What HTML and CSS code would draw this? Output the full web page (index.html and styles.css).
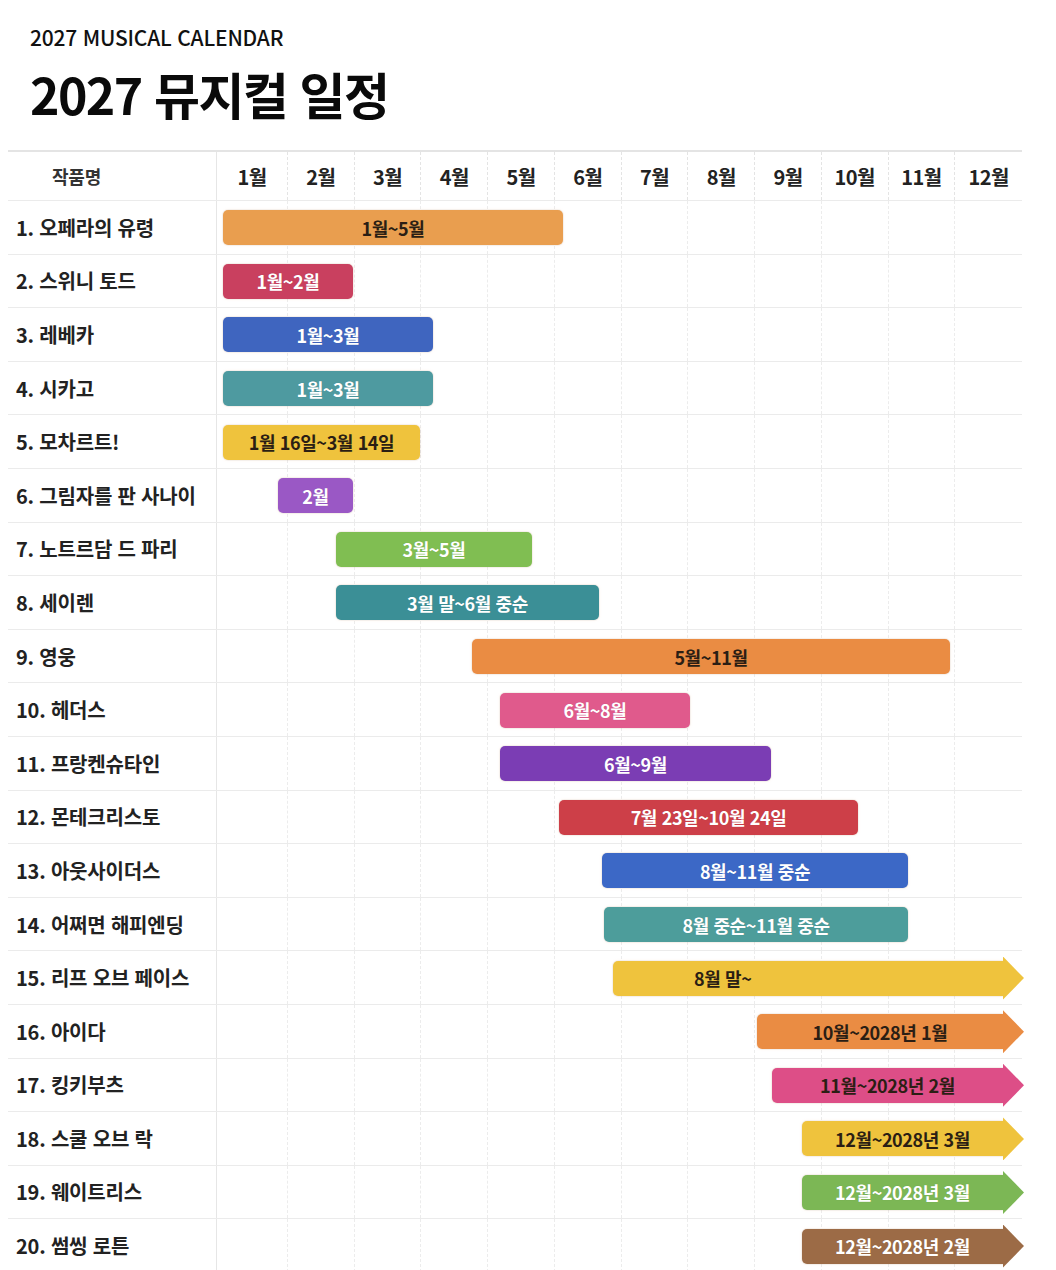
FILE: index.html
```html
<!DOCTYPE html>
<html lang="ko">
<head>
<meta charset="utf-8">
<title>2027 뮤지컬 일정</title>
<link rel="stylesheet" href="styles.css">
</head>
<body>
<header class="page-head">
  <p class="eyebrow">2027 MUSICAL CALENDAR</p>
  <h1 class="title">2027 뮤지컬 일정</h1>
</header>

<section class="chart">
  <div class="row head">
    <div class="name">작품명</div>
    <div class="track months">
      <span>1월</span><span>2월</span><span>3월</span><span>4월</span><span>5월</span><span>6월</span><span>7월</span><span>8월</span><span>9월</span><span>10월</span><span>11월</span><span>12월</span>
    </div>
  </div>

  <div class="row"><div class="name">1. 오페라의 유령</div><div class="track"><div class="cells"><i></i><i></i><i></i><i></i><i></i><i></i><i></i><i></i><i></i><i></i><i></i><i></i></div><div class="bar orange dark" style="left:6px;width:340px">1월~5월</div></div></div>
  <div class="row"><div class="name">2. 스위니 토드</div><div class="track"><div class="cells"><i></i><i></i><i></i><i></i><i></i><i></i><i></i><i></i><i></i><i></i><i></i><i></i></div><div class="bar crimson" style="left:6px;width:130px">1월~2월</div></div></div>
  <div class="row"><div class="name">3. 레베카</div><div class="track"><div class="cells"><i></i><i></i><i></i><i></i><i></i><i></i><i></i><i></i><i></i><i></i><i></i><i></i></div><div class="bar blue" style="left:6px;width:210px">1월~3월</div></div></div>
  <div class="row"><div class="name">4. 시카고</div><div class="track"><div class="cells"><i></i><i></i><i></i><i></i><i></i><i></i><i></i><i></i><i></i><i></i><i></i><i></i></div><div class="bar teal" style="left:6px;width:210px">1월~3월</div></div></div>
  <div class="row"><div class="name">5. 모차르트!</div><div class="track"><div class="cells"><i></i><i></i><i></i><i></i><i></i><i></i><i></i><i></i><i></i><i></i><i></i><i></i></div><div class="bar yellow dark" style="left:6px;width:197px">1월 16일~3월 14일</div></div></div>
  <div class="row"><div class="name">6. 그림자를 판 사나이</div><div class="track"><div class="cells"><i></i><i></i><i></i><i></i><i></i><i></i><i></i><i></i><i></i><i></i><i></i><i></i></div><div class="bar violet" style="left:61px;width:75px">2월</div></div></div>
  <div class="row"><div class="name">7. 노트르담 드 파리</div><div class="track"><div class="cells"><i></i><i></i><i></i><i></i><i></i><i></i><i></i><i></i><i></i><i></i><i></i><i></i></div><div class="bar green" style="left:119px;width:196px">3월~5월</div></div></div>
  <div class="row"><div class="name">8. 세이렌</div><div class="track"><div class="cells"><i></i><i></i><i></i><i></i><i></i><i></i><i></i><i></i><i></i><i></i><i></i><i></i></div><div class="bar deepteal" style="left:119px;width:263px">3월 말~6월 중순</div></div></div>
  <div class="row"><div class="name">9. 영웅</div><div class="track"><div class="cells"><i></i><i></i><i></i><i></i><i></i><i></i><i></i><i></i><i></i><i></i><i></i><i></i></div><div class="bar tangerine dark" style="left:255px;width:478px">5월~11월</div></div></div>
  <div class="row"><div class="name">10. 헤더스</div><div class="track"><div class="cells"><i></i><i></i><i></i><i></i><i></i><i></i><i></i><i></i><i></i><i></i><i></i><i></i></div><div class="bar pink" style="left:283px;width:190px">6월~8월</div></div></div>
  <div class="row"><div class="name">11. 프랑켄슈타인</div><div class="track"><div class="cells"><i></i><i></i><i></i><i></i><i></i><i></i><i></i><i></i><i></i><i></i><i></i><i></i></div><div class="bar purple" style="left:283px;width:271px">6월~9월</div></div></div>
  <div class="row"><div class="name">12. 몬테크리스토</div><div class="track"><div class="cells"><i></i><i></i><i></i><i></i><i></i><i></i><i></i><i></i><i></i><i></i><i></i><i></i></div><div class="bar red" style="left:342px;width:299px">7월 23일~10월 24일</div></div></div>
  <div class="row"><div class="name">13. 아웃사이더스</div><div class="track"><div class="cells"><i></i><i></i><i></i><i></i><i></i><i></i><i></i><i></i><i></i><i></i><i></i><i></i></div><div class="bar blue2" style="left:385px;width:306px">8월~11월 중순</div></div></div>
  <div class="row"><div class="name">14. 어쩌면 해피엔딩</div><div class="track"><div class="cells"><i></i><i></i><i></i><i></i><i></i><i></i><i></i><i></i><i></i><i></i><i></i><i></i></div><div class="bar teal2" style="left:387px;width:304px">8월 중순~11월 중순</div></div></div>
  <div class="row"><div class="name">15. 리프 오브 페이스</div><div class="track"><div class="cells"><i></i><i></i><i></i><i></i><i></i><i></i><i></i><i></i><i></i><i></i><i></i><i></i></div><div class="bar arrow yellow dark lead" style="left:396px;width:390px">8월 말~</div></div></div>
  <div class="row"><div class="name">16. 아이다</div><div class="track"><div class="cells"><i></i><i></i><i></i><i></i><i></i><i></i><i></i><i></i><i></i><i></i><i></i><i></i></div><div class="bar arrow tangerine dark" style="left:540px;width:246px">10월~2028년 1월</div></div></div>
  <div class="row"><div class="name">17. 킹키부츠</div><div class="track"><div class="cells"><i></i><i></i><i></i><i></i><i></i><i></i><i></i><i></i><i></i><i></i><i></i><i></i></div><div class="bar arrow pink2 dark" style="left:555px;width:231px">11월~2028년 2월</div></div></div>
  <div class="row"><div class="name">18. 스쿨 오브 락</div><div class="track"><div class="cells"><i></i><i></i><i></i><i></i><i></i><i></i><i></i><i></i><i></i><i></i><i></i><i></i></div><div class="bar arrow yellow dark" style="left:585px;width:201px">12월~2028년 3월</div></div></div>
  <div class="row"><div class="name">19. 웨이트리스</div><div class="track"><div class="cells"><i></i><i></i><i></i><i></i><i></i><i></i><i></i><i></i><i></i><i></i><i></i><i></i></div><div class="bar arrow green2" style="left:585px;width:201px">12월~2028년 3월</div></div></div>
  <div class="row"><div class="name">20. 썸씽 로튼</div><div class="track"><div class="cells"><i></i><i></i><i></i><i></i><i></i><i></i><i></i><i></i><i></i><i></i><i></i><i></i></div><div class="bar arrow brown" style="left:585px;width:201px">12월~2028년 2월</div></div></div>
</section>
</body>
</html>
```

FILE: styles.css
```css
* { box-sizing: border-box; }

html, body {
  margin: 0;
  padding: 0;
  background: #ffffff;
}

body {
  font-family: "Noto Sans CJK KR", "Noto Sans", sans-serif;
  color: #1a1a1a;
}

.page-head {
  padding: 22px 0 0 30px;
  height: 150px;
}

.eyebrow {
  margin: 0;
  font-size: 21px;
  line-height: 30px;
  font-weight: 500;
  letter-spacing: -0.2px;
  color: #111;
}

.title {
  margin: 10px 0 0;
  font-size: 50px;
  line-height: 62px;
  font-weight: 700;
  letter-spacing: -1.6px;
  color: #0a0a0a;
}

.chart {
  margin-left: 8px;
  width: 1014px;
  border-top: 2px solid #e4e4e4;
}

.row {
  display: grid;
  grid-template-columns: 208px 1fr;
  height: 53.6px;
  border-bottom: 1px solid #ebebeb;
}

.row.head {
  height: 49px;
}

.name {
  display: flex;
  align-items: center;
  padding-left: 8px;
  font-size: 20px;
  font-weight: 700;
  letter-spacing: -0.2px;
  color: #222;
  white-space: nowrap;
}

.head .name {
  padding-left: 44px;
  font-size: 18px;
  color: #333;
}

.track {
  position: relative;
  border-left: 1px solid #e6e6e6;
}

.months,
.cells {
  display: grid;
  grid-template-columns: 71px repeat(11, 1fr);
  height: 100%;
}

.months span {
  display: flex;
  align-items: center;
  justify-content: center;
  font-size: 20px;
  font-weight: 700;
  letter-spacing: -0.6px;
  color: #222;
  border-right: 1px dashed #e4e4e4;
}

.months span:last-child,
.cells i:last-child {
  border-right: none;
}

.cells i {
  border-right: 1px dashed #ececec;
}

.bar {
  position: absolute;
  top: 50%;
  height: 35px;
  margin-top: -17px;
  display: flex;
  align-items: center;
  justify-content: center;
  border-radius: 5px;
  font-size: 18px;
  font-weight: 700;
  letter-spacing: -0.4px;
  color: #ffffff;
  white-space: nowrap;
  box-shadow: 0 0 0 1px rgba(0, 0, 0, 0.04), 0 0 3px rgba(255, 200, 150, 0.25);
  text-shadow: 0 0 1px rgba(0, 0, 0, 0.15);
}

.bar.dark {
  color: #2b1e14;
  text-shadow: none;
}

.bar.lead {
  justify-content: flex-start;
  padding-left: 81px;
}

.bar.arrow {
  border-radius: 5px 0 0 5px;
}

.bar.arrow::after {
  content: "";
  position: absolute;
  top: -4px;
  right: -21px;
  width: 21px;
  height: 43px;
  background: inherit;
  clip-path: polygon(0 0, 100% 50%, 0 100%);
}

.orange { background: #e99e4f; }
.crimson { background: #c9405f; }
.blue { background: #3f65bf; }
.teal { background: #4e9aa0; }
.yellow { background: #efc33d; }
.violet { background: #9a58c5; }
.green { background: #80be52; }
.deepteal { background: #3b8f96; }
.tangerine { background: #ea8c43; }
.pink { background: #e05a8c; }
.purple { background: #7b3db4; }
.red { background: #cd3f48; }
.blue2 { background: #3c68c6; }
.teal2 { background: #4d9d9b; }
.pink2 { background: #dd4e87; }
.green2 { background: #7cb755; }
.brown { background: #9c6b46; }
```
